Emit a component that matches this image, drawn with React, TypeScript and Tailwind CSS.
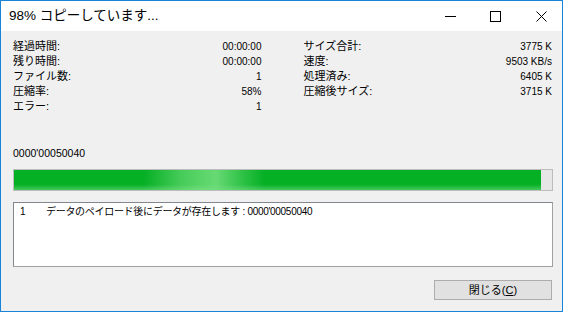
import React from "react";

const font = {
  fontFamily: '"Liberation Sans", "Noto Sans CJK JP", sans-serif',
};

type Stat = { label: string; value: string };

const leftStats: Stat[] = [
  { label: "経過時間:", value: "00:00:00" },
  { label: "残り時間:", value: "00:00:00" },
  { label: "ファイル数:", value: "1" },
  { label: "圧縮率:", value: "58%" },
  { label: "エラー:", value: "1" },
];

const rightStats: Stat[] = [
  { label: "サイズ合計:", value: "3775 K" },
  { label: "速度:", value: "9503 KB/s" },
  { label: "処理済み:", value: "6405 K" },
  { label: "圧縮後サイズ:", value: "3715 K" },
];

const StatColumn = ({ stats }: { stats: Stat[] }) => (
  <div className="flex flex-col">
    {stats.map((s) => (
      <div key={s.label} className="flex h-[15px] items-center justify-between">
        <span className="text-[11px] leading-[15px] text-black">{s.label}</span>
        <span className="pr-[1px] text-[10px] leading-[15px] text-black">{s.value}</span>
      </div>
    ))}
  </div>
);

const TitleBar = () => (
  <div className="flex h-[30px] shrink-0 items-center bg-white">
    <span className="pl-[8px] text-[13.5px] text-black">98% コピーしています...</span>
    <div className="ml-auto flex items-center pr-[15px]">
      <svg width="11" height="11" viewBox="0 0 11 11" className="mr-[34px]">
        <line x1="0" y1="5.5" x2="11" y2="5.5" stroke="#000" strokeWidth="1" />
      </svg>
      <svg width="11" height="11" viewBox="0 0 11 11" className="mr-[35px]">
        <rect x="0.5" y="0.5" width="10" height="10" fill="none" stroke="#000" strokeWidth="1" />
      </svg>
      <svg width="11" height="11" viewBox="0 0 11 11">
        <path d="M0.5 0.5 L10.5 10.5 M10.5 0.5 L0.5 10.5" stroke="#000" strokeWidth="1" />
      </svg>
    </div>
  </div>
);

export default function App() {
  const progress = 98;

  return (
    <div className="h-[313px] w-[566px] bg-white" style={font}>
      <div className="flex h-[312px] w-[563px] flex-col border border-[#1883d7]">
        <TitleBar />
        <div className="flex flex-1 flex-col bg-[#f0f0f0] pl-[12px] pr-[9px] pt-[8px]">
          <div className="grid grid-cols-2 gap-x-[41px]">
            <StatColumn stats={leftStats} />
            <StatColumn stats={rightStats} />
          </div>

          <div className="mt-[32px] h-[14px] text-[10.5px] leading-[14px] text-black">
            0000'00050040
          </div>

          <div className="relative mt-[9px] h-[22px] overflow-hidden border border-[#bcbcbc] bg-[#e6e6e6]">
            <div
              className="h-full bg-[linear-gradient(to_bottom,#06b025_0%,#06b025_72%,#45c85c_100%)]"
              style={{ width: `${progress}%` }}
            />
            <div className="absolute left-[130px] top-0 h-full w-[120px] bg-[linear-gradient(to_right,rgba(120,225,130,0)_0%,rgba(120,225,130,0.55)_30%,rgba(140,235,145,0.6)_45%,rgba(120,225,130,0.85)_60%,rgba(120,225,130,0.4)_80%,rgba(120,225,130,0)_100%)]" />
          </div>

          <div className="mt-[11px] h-[65px] border border-[#828790] border-r-[#a0a0a0] border-b-[#a0a0a0] bg-white">
            <div className="flex pl-[6px] pt-[1px] text-[10px] leading-[16px] text-black">
              <span className="w-[26px]">1</span>
              <span className="tracking-[-0.3px]">
                データのペイロード後にデータが存在します : 0000'00050040
              </span>
            </div>
          </div>

          <div className="mt-[13px] flex justify-end">
            <button className="mr-[1px] flex h-[20px] w-[118px] items-center justify-center border border-[#adadad] bg-[#e1e1e1] text-[11px] text-black">
              閉じる(<span className="underline">C</span>)
            </button>
          </div>
        </div>
      </div>
    </div>
  );
}
